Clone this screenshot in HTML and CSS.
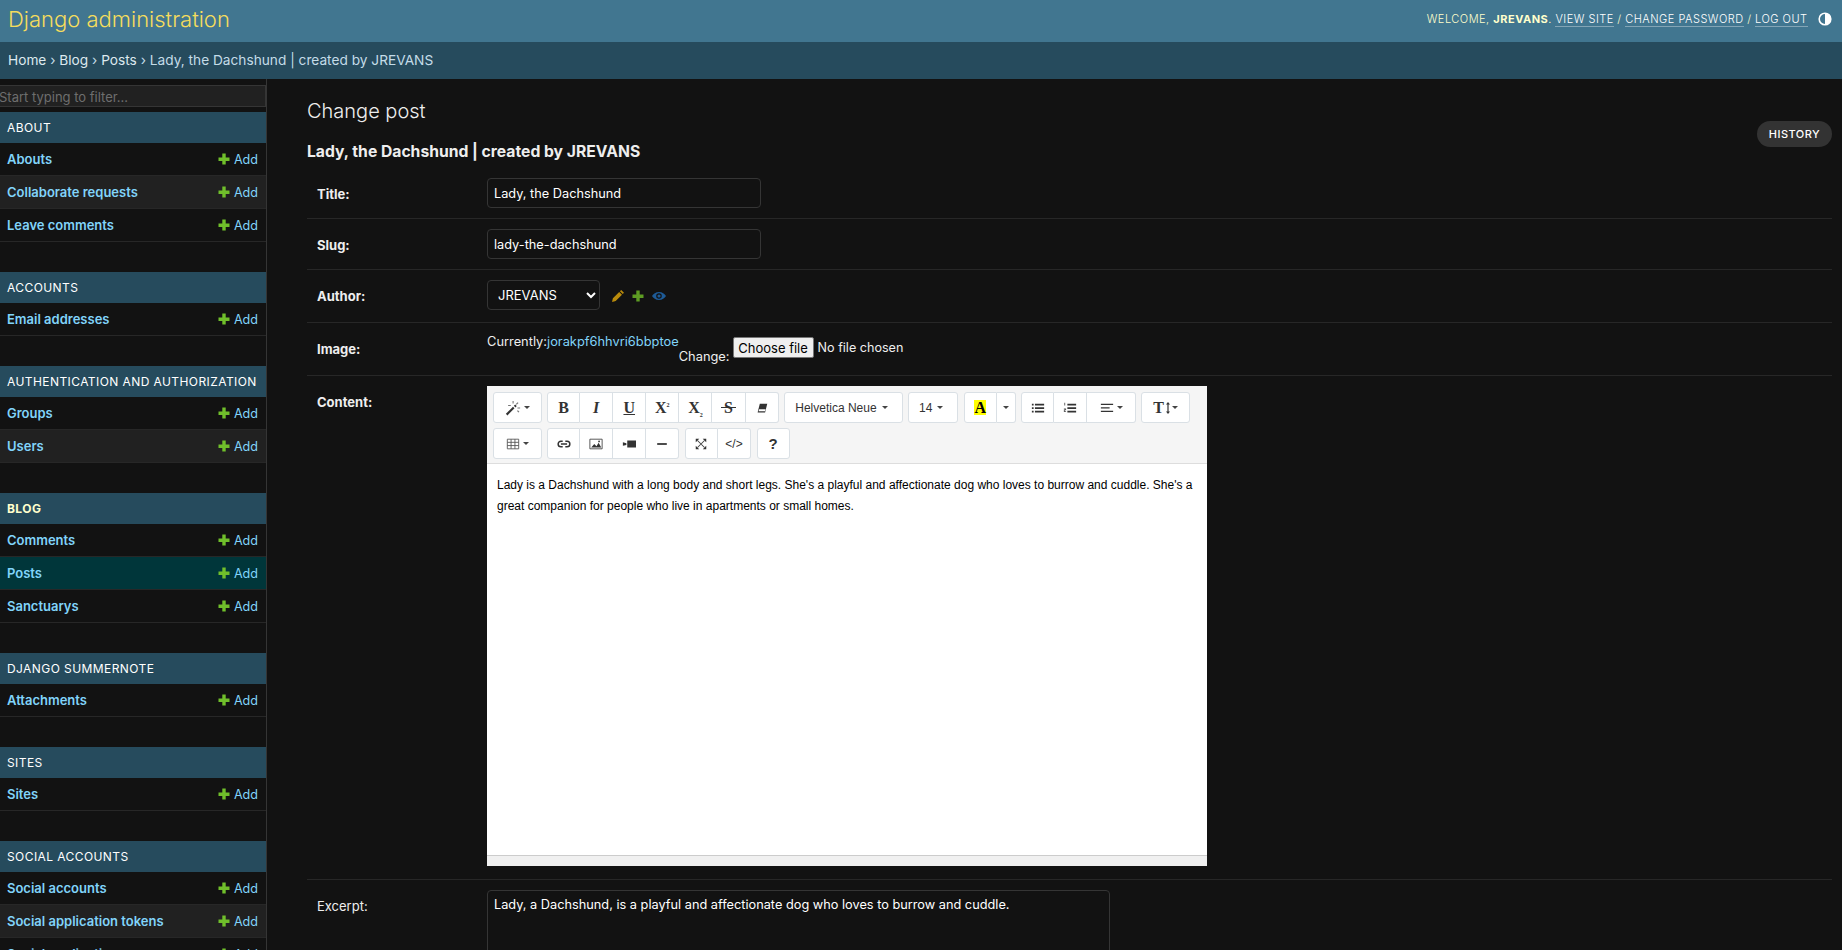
FILE: index.html
```html
<!DOCTYPE html>
<html lang="en">
<head>
    <meta charset="UTF-8">
    <meta name="viewport" content="width=device-width, initial-scale=1.0">
    <title>Change post | Django site admin</title>
    <link rel="stylesheet" href="styles.css">
</head>
<body>
    <svg class="icon-defs" aria-hidden="true">
        <symbol id="plus" viewBox="0 0 12 12"><path d="M4.3 .5h3.400v4H11.500v3.400H7.700v3.600H4.300V7.900H.500V4.500h3.800z"/></symbol>
    </svg>

    <header class="site-header">
        <a class="brand" href="#">Django administration</a>
        <div class="user-tools">
            <span>Welcome, <strong>jrevans</strong>.</span>
            <a href="#">View site</a> /
            <a href="#">Change password</a> /
            <a href="#">Log out</a>
            <svg class="theme-toggle" viewBox="0 0 14 14"><circle cx="7" cy="7" r="5.8" fill="none" stroke="#fff" stroke-width="1.6"/><path d="M7 1.2a5.8 5.8 0 0 1 0 11.6z" fill="#fff"/></svg>
        </div>
    </header>
    <nav class="breadcrumbs">
        <a href="#">Home</a> › <a href="#">Blog</a> › <a href="#">Posts</a> › Lady, the Dachshund | created by JREVANS
    </nav>

    <div class="page">
        <aside class="sidebar">
            <input class="nav-filter" type="search" placeholder="Start typing to filter...">

            <section class="app">
                <h3 class="caption">About</h3>
                <div class="model"><a href="#">Abouts</a><span class="add"><svg><use href="#plus"/></svg>Add</span></div>
                <div class="model"><a href="#">Collaborate requests</a><span class="add"><svg><use href="#plus"/></svg>Add</span></div>
                <div class="model"><a href="#">Leave comments</a><span class="add"><svg><use href="#plus"/></svg>Add</span></div>
            </section>
            <section class="app">
                <h3 class="caption">Accounts</h3>
                <div class="model"><a href="#">Email addresses</a><span class="add"><svg><use href="#plus"/></svg>Add</span></div>
            </section>
            <section class="app">
                <h3 class="caption">Authentication and Authorization</h3>
                <div class="model"><a href="#">Groups</a><span class="add"><svg><use href="#plus"/></svg>Add</span></div>
                <div class="model"><a href="#">Users</a><span class="add"><svg><use href="#plus"/></svg>Add</span></div>
            </section>
            <section class="app">
                <h3 class="caption current">Blog</h3>
                <div class="model"><a href="#">Comments</a><span class="add"><svg><use href="#plus"/></svg>Add</span></div>
                <div class="model selected"><a href="#">Posts</a><span class="add"><svg><use href="#plus"/></svg>Add</span></div>
                <div class="model plain"><a href="#">Sanctuarys</a><span class="add"><svg><use href="#plus"/></svg>Add</span></div>
            </section>
            <section class="app">
                <h3 class="caption">Django Summernote</h3>
                <div class="model"><a href="#">Attachments</a><span class="add"><svg><use href="#plus"/></svg>Add</span></div>
            </section>
            <section class="app">
                <h3 class="caption">Sites</h3>
                <div class="model"><a href="#">Sites</a><span class="add"><svg><use href="#plus"/></svg>Add</span></div>
            </section>
            <section class="app">
                <h3 class="caption">Social Accounts</h3>
                <div class="model"><a href="#">Social accounts</a><span class="add"><svg><use href="#plus"/></svg>Add</span></div>
                <div class="model"><a href="#">Social application tokens</a><span class="add"><svg><use href="#plus"/></svg>Add</span></div>
                <div class="model"><a href="#">Social applications</a><span class="add"><svg><use href="#plus"/></svg>Add</span></div>
            </section>
        </aside>

        <main class="content">
            <div class="title-row">
                <div>
                    <h1>Change post</h1>
                    <h2>Lady, the Dachshund | created by JREVANS</h2>
                </div>
                <a class="history" href="#">History</a>
            </div>

            <form>
                <div class="form-row">
                    <label class="required" for="id_title">Title:</label>
                    <input class="text-input" id="id_title" type="text" value="Lady, the Dachshund">
                </div>
                <div class="form-row">
                    <label class="required" for="id_slug">Slug:</label>
                    <input class="text-input" id="id_slug" type="text" value="lady-the-dachshund">
                </div>
                <div class="form-row author-row">
                    <label class="required" for="id_author">Author:</label>
                    <select class="author-select" id="id_author"><option>JREVANS</option></select>
                    <span class="related">
                        <svg viewBox="0 0 12 12"><path fill="#b88a0c" d="M9.200 0L12 2.800l-1.300 1.300-2.800-2.800zM7.200 2l2.800 2.800-6.300 6.300L0 12l.9-3.700z"/></svg>
                        <svg viewBox="0 0 12 12"><use href="#plus" fill="#5d9c23"/></svg>
                        <svg class="eye" viewBox="0 0 14 8"><path fill="#1d5a96" d="M7 0C3.800 0 1.300 1.800 0 4c1.300 2.200 3.800 4 7 4s5.700-1.800 7-4c-1.300-2.200-3.800-4-7-4zm0 6.800A2.800 2.800 0 1 1 7 1.200a2.800 2.800 0 0 1 0 5.600zM7 2.400a1.600 1.600 0 1 0 0 3.200 1.600 1.600 0 0 0 0-3.200z"/></svg>
                    </span>
                </div>
                <div class="form-row image-row">
                    <label class="required" for="id_image">Image:</label>
                    <span>Currently:<a href="#">jorakpf6hhvri6bbptoe</a></span>
                    <span class="change-label">Change:</span>
                    <div class="file-input">
                        <button type="button" class="file-button">Choose file</button>
                        <span>No file chosen</span>
                    </div>
                </div>
                <div class="form-row content-row">
                    <label class="required">Content:</label>
                    <div class="editor">
                        <div class="toolbar">
                            <div class="tool-row">
                                <div class="group"><button type="button" class="btn w48"><svg class="ico wand" viewBox="0 0 18 18"><path d="M1 15.600l8-8 1.700 1.700-8 8z"/><path d="M10 6.600l1.500-1.500 1.700 1.700-1.500 1.500z"/><path d="M8.500 1h1.200v3H8.500zM14 8.500h3v1.200h-3zM14.200 2.400l1 1-2 2-1-1zM3.500 5.500h3v1.200h-3zM13.500 12.500l1-1 1.700 1.700-1 1z" fill="#777"/></svg><i class="caret"></i></button></div>
                                <div class="group">
                                    <button type="button" class="btn serif big">B</button>
                                    <button type="button" class="btn serif big italic">I</button>
                                    <button type="button" class="btn serif big under">U</button>
                                    <button type="button" class="btn serif big"><span>X<sup>2</sup></span></button>
                                    <button type="button" class="btn serif big"><span>X<sub>2</sub></span></button>
                                    <button type="button" class="btn serif big"><span class="strike">S</span></button>
                                    <button type="button" class="btn"><svg class="ico" viewBox="0 0 16 16"><path d="M5.500 3H14l-2.500 10H3z"/><path fill="#fff" d="M4.700 9.500h7.400l-.6 2.200H4.100z"/></svg></button>
                                </div>
                                <div class="group"><button type="button" class="btn font-btn">Helvetica Neue<i class="caret"></i></button></div>
                                <div class="group"><button type="button" class="btn size-btn">14<i class="caret"></i></button></div>
                                <div class="group">
                                    <button type="button" class="btn serif big"><span class="highlight">A</span></button>
                                    <button type="button" class="btn w19"><i class="caret"></i></button>
                                </div>
                                <div class="group">
                                    <button type="button" class="btn"><svg class="ico" viewBox="0 0 16 16"><path d="M1 3h2v2H1zM1 7h2v2H1zM1 11h2v2H1zM4.500 3H15v2H4.500zM4.500 7H15v2H4.500zM4.500 11H15v2H4.500z"/></svg></button>
                                    <button type="button" class="btn"><svg class="ico" viewBox="0 0 16 16"><path d="M5 3h10v2H5zM5 7h10v2H5zM5 11h10v2H5z"/><path d="M1.500 2h1v3h-1zM1 8.500h2.500v2.200H2v1h1.500v1H1v-3h1.500v-.2H1z" fill="#555"/></svg></button>
                                    <button type="button" class="btn w48"><svg class="ico" viewBox="0 0 16 16"><path d="M1 3h14v1.600H1zM1 7h10v1.600H1zM1 11h14v1.600H1z"/></svg><i class="caret"></i></button>
                                </div>
                                <div class="group"><button type="button" class="btn w48 serif big tight">T<svg class="ico ico-arrow" viewBox="0 0 6 14"><path d="M3 1l2 2.500H3.600v7H5L3 13l-2-2.500h1.400v-7H1z"/></svg><i class="caret"></i></button></div>
                            </div>
                            <div class="tool-row">
                                <div class="group"><button type="button" class="btn w48"><svg class="ico" viewBox="0 0 16 16"><path fill="none" stroke="#555" d="M1.500 2.500h13v11h-13zM1.500 6.100h13M1.500 9.800h13M5.800 2.500v11M10.200 2.500v11"/></svg><i class="caret"></i></button></div>
                                <div class="group">
                                    <button type="button" class="btn"><svg class="ico" viewBox="0 0 16 16"><path fill="none" stroke="#333" stroke-width="1.700" d="M6.500 4.800H4.500a3.200 3.200 0 0 0 0 6.400h2M9.500 4.800h2a3.200 3.200 0 0 1 0 6.400h-2M4.500 8h7"/></svg></button>
                                    <button type="button" class="btn"><svg class="ico" viewBox="0 0 16 16"><path fill="none" stroke="#444" d="M1 2.500h14v11H1z"/><path d="M2.500 12l3.500-4 2.500 2.500 2.500-4 3 5.500z"/><circle cx="11.500" cy="5" r="1"/></svg></button>
                                    <button type="button" class="btn"><svg class="ico" viewBox="0 0 16 16"><path d="M6 4h10v8H6zM1 6l4 1v2l-4 1z"/></svg></button>
                                    <button type="button" class="btn"><svg class="ico" viewBox="0 0 16 16"><path d="M2.500 7h11v2h-11z"/></svg></button>
                                </div>
                                <div class="group">
                                    <button type="button" class="btn"><svg class="ico" viewBox="0 0 16 16"><path fill="none" stroke="#444" stroke-width="1.200" d="M4 4l8 8M12 4l-8 8"/><path d="M2 2h4L2 6zM14 2v4l-4-4zM14 14h-4l4-4zM2 14v-4l4 4z" fill="#333"/></svg></button>
                                    <button type="button" class="btn code">&lt;/&gt;</button>
                                </div>
                                <div class="group"><button type="button" class="btn help">?</button></div>
                            </div>
                        </div>
                        <div class="editable">Lady is a Dachshund with a long body and short legs. She's a playful and affectionate dog who loves to burrow and cuddle. She's a great companion for people who live in apartments or small homes.</div>
                        <div class="statusbar"></div>
                    </div>
                </div>
                <div class="form-row">
                    <label for="id_excerpt">Excerpt:</label>
                    <textarea class="text-area" id="id_excerpt" rows="10">Lady, a Dachshund, is a playful and affectionate dog who loves to burrow and cuddle.</textarea>
                </div>
            </form>
        </main>
    </div>
</body>
</html>
```

FILE: styles.css
```css
* {
    box-sizing: border-box;
}
html, body {
    height: 100%;
}
body {
    margin: 0;
    height: 950px;
    overflow: hidden;
    background: #121212;
    color: #eeeeee;
    font-family: Inter, "Noto Sans", sans-serif;
    font-size: 13px;
}
a {
    color: #81d4fa;
    text-decoration: none;
}
.icon-defs {
    display: none;
}

/* header */
.site-header {
    height: 42px;
    background: #417690;
    display: flex;
    justify-content: space-between;
    align-items: center;
    padding: 0 10px 4px 8px;
}
.brand {
    color: #f5dd5d;
    font-size: 22px;
    font-weight: 300;
}
.user-tools {
    display: flex;
    align-items: center;
    gap: 3.500px;
    color: #ffffcc;
    font-size: 11px;
    font-weight: 300;
    letter-spacing: 0.5px;
    text-transform: uppercase;
}
.user-tools strong {
    font-weight: 700;
}
.user-tools a {
    color: #fff;
    border-bottom: 1px solid rgba(255, 255, 255, 0.35);
}
.theme-toggle {
    width: 14px;
    height: 14px;
    margin-left: 7px;
}
.breadcrumbs {
    height: 37px;
    background: #264b5d;
    color: #c4dce8;
    font-size: 13.700px;
    line-height: 36px;
    padding-left: 8px;
}
.breadcrumbs a {
    color: #dde9ef;
}

/* sidebar */
.page {
    display: flex;
}
.sidebar {
    width: 267px;
    flex: none;
    border-right: 1px solid #353535;
    overflow: hidden;
    height: 871px;
}
.nav-filter {
    display: block;
    width: 269px;
    height: 22px;
    margin: 6px 0 5px -3px;
    padding: 1px 0 0 1px;
    background: #212121;
    border: 1px solid #353535;
    color: #eee;
    font: 13px Inter, sans-serif;
    outline: none;
}
.nav-filter::placeholder {
    color: #6e6e6e;
}
.app {
    margin-bottom: 30px;
}
.caption {
    margin: 0;
    height: 31px;
    background: #264b5d;
    color: #fff;
    font-size: 12px;
    font-weight: 400;
    line-height: 31px;
    letter-spacing: 0.42px;
    text-transform: uppercase;
    padding-left: 7px;
}
.caption.current {
    color: #ffffcc;
    font-weight: 700;
}
.model {
    height: 33px;
    display: flex;
    justify-content: space-between;
    align-items: center;
    padding: 0 8px 0 7px;
    border-bottom: 1px solid #272727;
}
.model:nth-child(3) {
    background: #212121;
}
.model.selected {
    background: #00363a;
}
.model > a {
    font-weight: 600;
}
.add {
    display: flex;
    align-items: center;
    color: #81d4fa;
    font-size: 12.600px;
}
.add svg {
    width: 12px;
    height: 12px;
    margin: -1px 4px 0 0;
    fill: #70bf2b;
}

/* main column */
.content {
    flex: 1;
    padding: 20px 10px 0 40px;
    min-width: 0;
}
.title-row {
    display: flex;
    justify-content: space-between;
    align-items: center;
    margin-bottom: 6px;
}
h1 {
    margin: 0 0 19px;
    font-size: 20px;
    line-height: 24px;
    font-weight: 300;
}
h2 {
    margin: 0;
    font-size: 15.700px;
    line-height: 20px;
    font-weight: 700;
}
.history {
    margin-top: 7px;
    height: 26px;
    width: 75px;
    border-radius: 13px;
    background: #333333;
    color: #fff;
    font-size: 11px;
    font-weight: 500;
    line-height: 26px;
    letter-spacing: 0.5px;
    text-align: center;
    text-transform: uppercase;
}
.form-row {
    display: flex;
    align-items: flex-start;
    padding: 10px;
    border-bottom: 1px solid #272727;
}
.form-row label {
    width: 170px;
    flex: none;
    padding-top: 8px;
    line-height: 16px;
}
.form-row label.required {
    font-weight: 700;
}
.text-input {
    width: 274px;
    height: 30px;
    padding: 5px 6px;
    background: #121212;
    border: 1px solid #353535;
    border-radius: 4px;
    color: #fff;
    font: 12.750px Inter, sans-serif;
}
.author-row {
    height: 53px;
}
.author-select {
    width: 113px;
    height: 30px;
    padding: 0 6px;
    background: #121212;
    border: 1px solid #353535;
    border-radius: 4px;
    color: #fff;
    font: 13px Inter, sans-serif;
}
.related {
    display: flex;
    align-items: center;
    gap: 8px;
    height: 32px;
    margin-left: 12px;
}
.related svg {
    width: 12px;
    height: 12px;
}
.related .eye {
    width: 14px;
}
.image-row {
    height: 53px;
    align-items: flex-start;
}
.image-row > span {
    font-size: 12.850px;
    line-height: 18px;
}
.change-label {
    align-self: flex-end;
    padding-right: 3px;
    margin-bottom: -1px;
}
.file-input {
    display: flex;
    align-items: center;
    gap: 4px;
    margin-top: 4px;
    color: #eee;
    font-size: 12.600px;
}
.file-button {
    width: 81px;
    height: 21px;
    padding: 0;
    background: #efefef;
    border: 1px solid #767676;
    border-radius: 2px;
    color: #000;
    font: 13px Inter, sans-serif;
}

/* summernote */
.content-row {
    padding-bottom: 13px;
}
.editor {
    width: 720px;
    height: 480px;
    display: flex;
    flex-direction: column;
    background: #fff;
    color: #000;
}
.toolbar {
    height: 78px;
    background: #f5f5f5;
    border-bottom: 1px solid #dddddd;
    padding: 6px 0 0 6px;
    display: flex;
    flex-direction: column;
    gap: 5px;
}
.tool-row {
    display: flex;
    gap: 5.500px;
}
.group {
    display: flex;
}
.btn {
    height: 31px;
    width: 33.100px;
    padding: 0;
    display: flex;
    align-items: center;
    justify-content: center;
    gap: 3px;
    background: #fff;
    border: 1px solid #dae0e5;
    border-left-width: 0;
    color: #333;
    font: 13px "Liberation Sans", Arial, sans-serif;
}
.btn:first-child {
    border-left-width: 1px;
    border-radius: 3px 0 0 3px;
}
.btn:last-child {
    border-radius: 0 3px 3px 0;
}
.btn:only-child {
    border-radius: 3px;
}
.w48 {
    width: 48.500px;
}
.w19 {
    width: 19px;
}
.font-btn {
    width: 118.500px;
    padding-right: 4px;
    font-size: 12px;
    gap: 5px;
}
.size-btn {
    width: 50px;
    padding-right: 4px;
    font-size: 12px;
    gap: 5px;
}
.ico {
    width: 14px;
    height: 14px;
    fill: #333;
}
.wand {
    width: 16px;
    height: 16px;
}
.ico-arrow {
    width: 6px;
}
.caret {
    width: 0;
    height: 0;
    border: 3.500px solid transparent;
    border-top-color: #444;
    border-bottom-width: 0;
}
.serif {
    font: 700 15px "Liberation Serif", serif;
}
.big {
    font-size: 16px;
}
.tight {
    gap: 1px;
}
.serif sup, .serif sub {
    font-size: 6px;
    line-height: 0;
}
.italic {
    font-style: italic;
}
.under {
    text-decoration: underline;
}
.strike {
    position: relative;
    display: block;
    padding: 0 2px;
}
.strike::after {
    content: "";
    position: absolute;
    left: -1px;
    right: -1px;
    top: 8px;
    height: 1px;
    background: #333;
}
.highlight {
    display: block;
    width: 12px;
    height: 15px;
    line-height: 16px;
    background: #ffff00;
    color: #000;
}
.code {
    font-size: 12px;
}
.help {
    font-size: 15px;
    font-weight: 700;
}
.editable {
    flex: 1;
    padding: 11px 10px;
    font: 12px/21px "Liberation Sans", Arial, sans-serif;
    color: #000;
}
.statusbar {
    height: 11px;
    background: #f0f0f0;
    border-top: 1px solid #cccccc;
}
.text-area {
    width: 623px;
    height: 200px;
    padding: 6px 6px;
    background: #121212;
    border: 1px solid #353535;
    border-radius: 4px;
    color: #fff;
    font: 12.750px Inter, sans-serif;
    resize: none;
}
```
